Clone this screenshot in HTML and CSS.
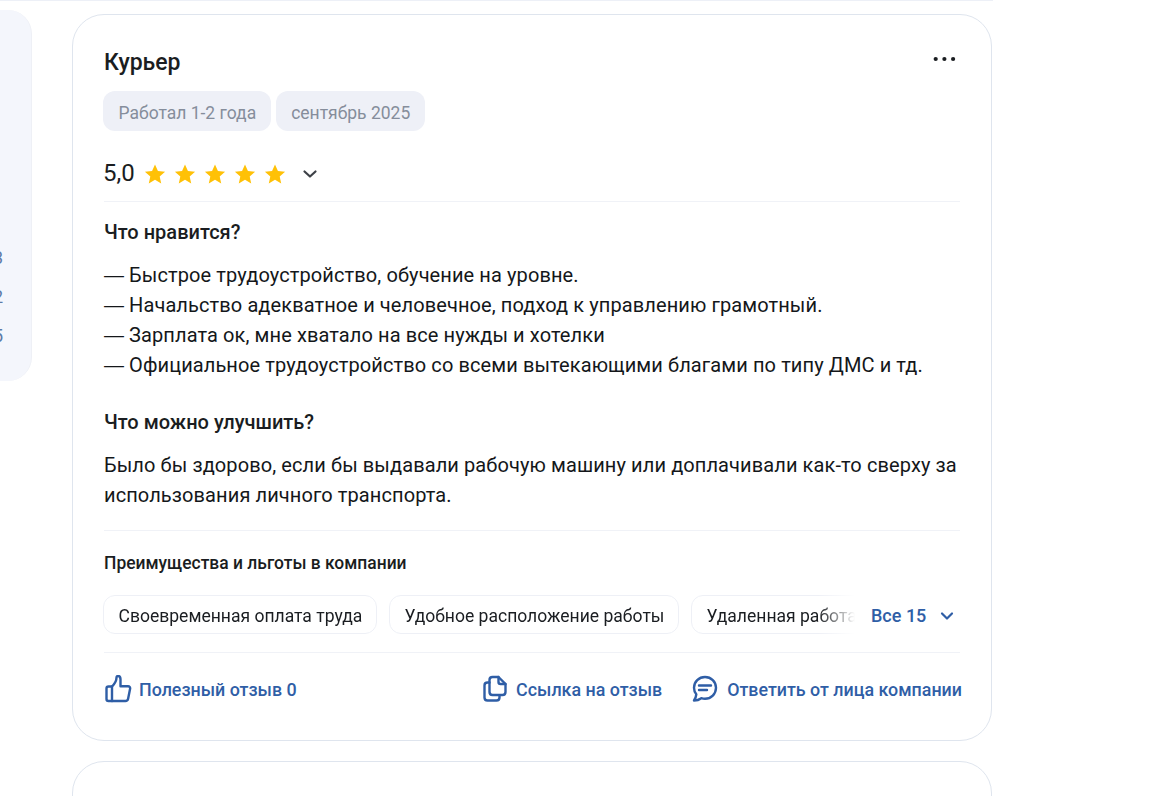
FILE: index.html
```html
<!DOCTYPE html>
<html lang="en">
<head>
    <meta charset="UTF-8">
    <meta name="viewport" content="width=device-width, initial-scale=1.0">
    <title>Отзыв</title>
    <link rel="stylesheet" href="styles.css">
</head>
<body>
    <div class="top-line"></div>
    <div class="page">
        <aside class="side">
            <div class="side-nums">
                <span>3</span>
                <span>2</span>
                <span>5</span>
            </div>
        </aside>
        <main class="reviews">
            <article class="card">
                <div class="card-head">
                    <h2 class="job">Курьер</h2>
                    <svg class="more" width="24" height="6" viewBox="0 0 24 6" fill="#1a1d21">
                        <circle cx="2.7" cy="3" r="2.1"/>
                        <circle cx="11.4" cy="3" r="2.1"/>
                        <circle cx="20.1" cy="3" r="2.1"/>
                    </svg>
                </div>
                <div class="tags">
                    <span class="tag">Работал 1-2 года</span>
                    <span class="tag">сентябрь 2025</span>
                </div>
                <div class="rating">
                    <span class="score">5,0</span>
                    <div class="stars">
                        <svg width="22" height="22" viewBox="0 0 24 24" fill="#ffc107"><path d="M12 1.500l3.200 7.200 7.800.8-5.900 5.200 1.700 7.700L12 18.400l-6.800 4 1.700-7.700L1 9.500l7.800-.8z"/></svg>
                        <svg width="22" height="22" viewBox="0 0 24 24" fill="#ffc107"><path d="M12 1.500l3.200 7.200 7.800.8-5.900 5.200 1.700 7.700L12 18.400l-6.800 4 1.700-7.700L1 9.500l7.800-.8z"/></svg>
                        <svg width="22" height="22" viewBox="0 0 24 24" fill="#ffc107"><path d="M12 1.500l3.200 7.200 7.800.8-5.900 5.200 1.700 7.700L12 18.400l-6.800 4 1.700-7.700L1 9.500l7.800-.8z"/></svg>
                        <svg width="22" height="22" viewBox="0 0 24 24" fill="#ffc107"><path d="M12 1.500l3.200 7.200 7.800.8-5.900 5.200 1.700 7.700L12 18.400l-6.800 4 1.700-7.700L1 9.500l7.800-.8z"/></svg>
                        <svg width="22" height="22" viewBox="0 0 24 24" fill="#ffc107"><path d="M12 1.500l3.200 7.200 7.800.8-5.900 5.200 1.700 7.700L12 18.400l-6.800 4 1.700-7.700L1 9.500l7.800-.8z"/></svg>
                    </div>
                    <svg class="rating-arrow" width="16" height="10" viewBox="0 0 16 10" fill="none" stroke="#3d4147" stroke-width="2.2" stroke-linecap="round" stroke-linejoin="round"><path d="M2.500 2.500L8 7.500l5.500-5"/></svg>
                </div>
                <section class="body-part">
                    <h3 class="question">Что нравится?</h3>
                    <p class="answer"><span class="dash">—</span> Быстрое трудоустройство, обучение на уровне.<br><span class="dash">—</span> Начальство адекватное и человечное, подход к управлению грамотный.<br><span class="dash">—</span> Зарплата ок, мне хватало на все нужды и хотелки<br><span class="dash">—</span> Официальное трудоустройство со всеми вытекающими благами по типу ДМС и тд.</p>
                    <h3 class="question second">Что можно улучшить?</h3>
                    <p class="answer">Было бы здорово, если бы выдавали рабочую машину или доплачивали как-то сверху за использования личного транспорта.</p>
                </section>
                <section class="perks">
                    <h4 class="perks-title">Преимущества и льготы в компании</h4>
                    <div class="perks-row">
                        <div class="perks-list">
                            <span class="perk">Своевременная оплата труда</span>
                            <span class="perk">Удобное расположение работы</span>
                            <span class="perk">Удаленная работа</span>
                        </div>
                        <a class="perks-all">Все 15
                            <svg width="14" height="10" viewBox="0 0 14 10" fill="none" stroke="#2f5ea6" stroke-width="2.2" stroke-linecap="round" stroke-linejoin="round"><path d="M2 2.500L7 7.500l5-5"/></svg>
                        </a>
                    </div>
                </section>
                <footer class="actions">
                    <a class="action useful">
                        <svg width="28" height="28" viewBox="4 4 28 28" fill="none" stroke="#2f5ea6" stroke-width="2.4" stroke-linejoin="round" stroke-linecap="round"><path d="M11 15.500H7.500c-1.300 0-2 .7-2 2v10.500c0 1.300.7 2 2 2h17c1.500 0 2.300-.7 2.600-2.200l2-10c.3-1.500-.6-2.600-2.100-2.600H19.500V8.500c0-2.200-1-3.500-2.500-3.500-1 0-1.500.6-1.500 1.500 0 3.500-1.500 6-4.500 9z"/><path d="M11 15.500V30"/></svg>
                        Полезный отзыв 0
                    </a>
                    <a class="action copy">
                        <svg width="28" height="28" viewBox="4 4 28 28" fill="none" stroke="#2f5ea6" stroke-width="2.4" stroke-linejoin="round" stroke-linecap="round"><path d="M11.500 9c0-2 1-3 3-3h6l7 7v8c0 2-1 3-3 3h-10c-2 0-3-1-3-3z"/><path d="M20.500 6v5c0 1.500.7 2 2 2h5"/><path d="M11.500 11.500h-2c-2 0-3 1-3 3v12c0 2 1 3 3 3h9c2 0 3-1 3-3v-2"/></svg>
                        Ссылка на отзыв
                    </a>
                    <a class="action">
                        <svg width="28" height="28" viewBox="4 4 28 28" fill="none" stroke="#2f5ea6" stroke-width="2.4" stroke-linejoin="round" stroke-linecap="round"><path d="M17 6C10.900 6 6 10.700 6 16.800c0 2.500.9 4.800 2.300 6.500-.2 2.200-1 4.300-2.300 6.200 2.800 0 5.300-.8 7.300-2.300 1.200.4 2.400.6 3.700.6 6.100 0 11-4.900 11-11S23.100 6 17 6z"/><path d="M11 14.500h12M11 19h8"/></svg>
                        Ответить от лица компании
                    </a>
                </footer>
            </article>
            <article class="card next"></article>
        </main>
    </div>
</body>
</html>
```

FILE: styles.css
```css
html, body {
    height: 100%;
}
body {
    margin: 0;
    font-family: Roboto, sans-serif;
    color: #1a1d21;
    background-color: #fff;
    overflow: hidden;
}
.top-line {
    width: 993px;
    height: 1px;
    background-color: #edf0f7;
}
.page {
    display: flex;
    gap: 40px;
    margin-left: -269px;
    margin-top: 9px;
}
.side {
    flex: none;
    width: 300px;
    height: 371px;
    border-radius: 0 24px 24px 0;
    background-color: #f4f6fc;
    border-right: 1px solid #eef0f6;
    overflow: hidden;
    display: flex;
    justify-content: flex-end;
}
.side-nums {
    display: flex;
    flex-direction: column;
    gap: 21px;
    margin-top: 239px;
    margin-right: 28px;
    font-size: 18px;
    line-height: 18px;
    color: #5c7ba8;
}
.reviews {
    flex: none;
    width: 920px;
    margin-top: 4px;
    display: flex;
    flex-direction: column;
    gap: 20px;
}
.card {
    box-sizing: border-box;
    height: 727px;
    padding: 31px 31px 0;
    border: 1px solid #dfe5ee;
    border-radius: 32px;
    background-color: #fff;
}
.card.next {
    height: 120px;
}
.card-head {
    display: flex;
    justify-content: space-between;
    align-items: flex-start;
}
.job {
    margin: 0;
    font-size: 23px;
    line-height: 34px;
    font-weight: 500;
}
.more {
    margin-top: 10px;
    margin-right: 3px;
}
.tags {
    display: flex;
    gap: 5px;
    margin-top: 11px;
    margin-left: -1px;
}
.tag {
    height: 40px;
    padding: 0 14.500px 0 15.500px;
    border-radius: 12px;
    font-size: 17.5px;
    line-height: 44px;
    color: #858d9b;
    background-color: #eef0f7;
}
.rating {
    display: flex;
    align-items: center;
    height: 71px;
    padding-top: 16px;
    box-sizing: border-box;
    border-bottom: 1px solid #f0f2f7;
}
.score {
    font-size: 24px;
    line-height: 28px;
    margin-left: -1px;
    margin-right: 9px;
    margin-bottom: 2px;
}
.stars {
    display: flex;
    gap: 8px;
}
.rating-arrow {
    margin-left: 16px;
}
.body-part {
    padding-top: 15px;
    padding-bottom: 20px;
    border-bottom: 1px solid #f0f2f7;
}
.question {
    margin: 0;
    font-size: 20px;
    line-height: 30px;
    font-weight: 500;
}
.question.second {
    margin-top: 27px;
}
.answer {
    margin: 13px 0 0;
    font-size: 20px;
    line-height: 30px;
    letter-spacing: .1px;
    color: #14171a;
}
.dash {
    font-family: "Liberation Sans", sans-serif;
    letter-spacing: 0;
}
.perks {
    padding-top: 20px;
    border-bottom: 1px solid #f0f2f7;
    padding-bottom: 18px;
}
.perks-title {
    margin: 0;
    font-size: 17.45px;
    line-height: 24px;
    font-weight: 500;
}
.perks-row {
    display: flex;
    align-items: center;
    margin-top: 20px;
    margin-left: -1px;
}
.perks-list {
    display: flex;
    gap: 12px;
    width: 752px;
    overflow: hidden;
    -webkit-mask-image: linear-gradient(to right, #000 715px, transparent 752px);
    mask-image: linear-gradient(to right, #000 715px, transparent 752px);
}
.perk {
    flex: none;
    height: 37px;
    padding: 0 13.500px 0 14.500px;
    border: 1px solid #eef0f6;
    border-radius: 12px;
    font-size: 17.55px;
    line-height: 41px;
    white-space: nowrap;
}
.perks-all {
    display: flex;
    align-items: center;
    gap: 14px;
    margin-left: 16px;
    padding-top: 2px;
    font-size: 18px;
    font-weight: 500;
    color: #2f5ea6;
}
.actions {
    display: flex;
    align-items: center;
    height: 72px;
    margin-right: -2px;
}
.action {
    display: flex;
    align-items: center;
    gap: 7px;
    margin-left: 30px;
    font-size: 17.85px;
    font-weight: 500;
    color: #2f5ea6;
    white-space: nowrap;
}
.action.copy {
    gap: 6px;
}
.action.useful {
    gap: 6px;
    margin-left: 1px;
    margin-right: auto;
}
```
